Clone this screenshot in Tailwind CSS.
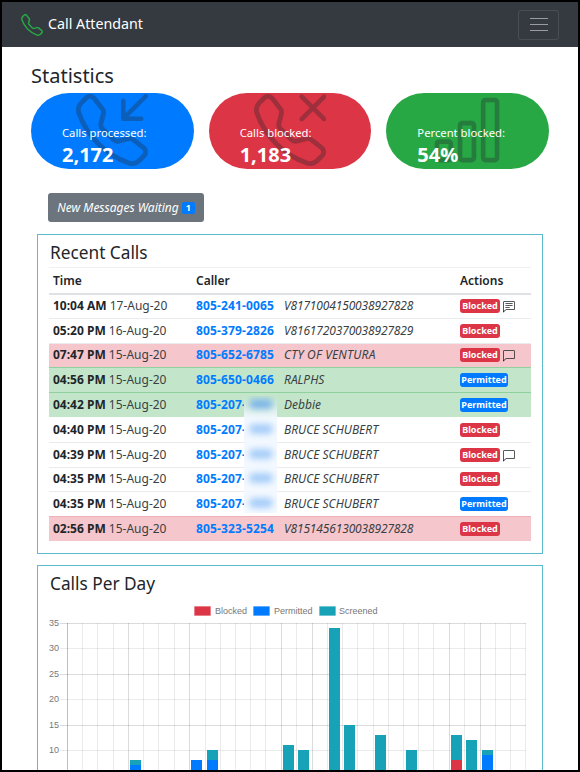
<!DOCTYPE html>
<html lang="en">
<head>
  <meta charset="UTF-8" />
  <title>Call Attendant</title>
  <script src="https://cdn.jsdelivr.net/npm/@tailwindcss/browser@4"></script>
</head>
<body class="bg-black">
<div class="w-[580px] h-[772px] border-2 border-black bg-white overflow-hidden font-['Noto_Sans',sans-serif] text-[#212529] text-[12px]">

  <!-- Navbar -->
  <nav class="h-[45px] bg-[#343a40] flex items-center justify-between pl-[19px] pr-[19px]">
    <div class="flex items-center gap-[5px]">
      <svg class="w-[22px] h-[22px] text-[#28a745]" viewBox="0 0 16 16" fill="currentColor"><path fill-rule="evenodd" d="M3.654 1.328a.678.678 0 0 0-1.015-.063L1.605 2.3c-.483.484-.661 1.169-.45 1.77a17.568 17.568 0 0 0 4.168 6.608 17.569 17.569 0 0 0 6.608 4.168c.601.211 1.286.033 1.77-.45l1.034-1.034a.678.678 0 0 0-.063-1.015l-2.307-1.794a.678.678 0 0 0-.58-.122l-2.19.547a1.745 1.745 0 0 1-1.657-.459L5.482 8.062a1.745 1.745 0 0 1-.46-1.657l.548-2.19a.678.678 0 0 0-.122-.58L3.654 1.328zM1.884.511a1.745 1.745 0 0 1 2.612.163L6.29 2.98c.329.423.445.974.315 1.494l-.547 2.19a.678.678 0 0 0 .178.643l2.457 2.457a.678.678 0 0 0 .644.178l2.189-.547a1.745 1.745 0 0 1 1.494.315l2.306 1.794c.829.645.905 1.87.163 2.611l-1.034 1.034c-.74.74-1.846 1.065-2.877.702a18.634 18.634 0 0 1-7.01-4.42 18.634 18.634 0 0 1-4.42-7.009c-.362-1.03-.037-2.137.703-2.877L1.885.511z"/></svg>
      <span class="text-white text-[14.25px] leading-[20px] mb-[2px]">Call Attendant</span>
    </div>
    <button class="w-[41px] h-[30px] border border-white/10 rounded-[3px] flex flex-col items-center justify-center gap-[5px]">
      <span class="block w-[18px] h-px bg-white/50"></span>
      <span class="block w-[18px] h-px bg-white/50"></span>
      <span class="block w-[18px] h-px bg-white/50"></span>
    </button>
  </nav>

  <main class="pl-[29px]">
    <h2 class="h-[46px] pt-[15px] text-[20px] leading-[28px]">Statistics</h2>

    <!-- Stat pills -->
    <div class="flex gap-[15px] w-[518px] text-white">
      <div class="relative flex-1 h-[76px] rounded-[38px] bg-[#007bff] overflow-hidden pl-[31px] pt-[31px]">
        <svg class="absolute left-[45px] top-[1px] w-[72px] h-[72px] text-[#212529]/33" viewBox="0 0 16 16" fill="currentColor"><path fill-rule="evenodd" d="M3.654 1.328a.678.678 0 0 0-1.015-.063L1.605 2.3c-.483.484-.661 1.169-.45 1.77a17.568 17.568 0 0 0 4.168 6.608 17.569 17.569 0 0 0 6.608 4.168c.601.211 1.286.033 1.77-.45l1.034-1.034a.678.678 0 0 0-.063-1.015l-2.307-1.794a.678.678 0 0 0-.58-.122l-2.19.547a1.745 1.745 0 0 1-1.657-.459L5.482 8.062a1.745 1.745 0 0 1-.46-1.657l.548-2.19a.678.678 0 0 0-.122-.58L3.654 1.328zM1.884.511a1.745 1.745 0 0 1 2.612.163L6.29 2.98c.329.423.445.974.315 1.494l-.547 2.19a.678.678 0 0 0 .178.643l2.457 2.457a.678.678 0 0 0 .644.178l2.189-.547a1.745 1.745 0 0 1 1.494.315l2.306 1.794c.829.645.905 1.87.163 2.611l-1.034 1.034c-.74.74-1.846 1.065-2.877.702a18.634 18.634 0 0 1-7.01-4.42 18.634 18.634 0 0 1-4.42-7.009c-.362-1.03-.037-2.137.703-2.877L1.885.511z"/><path fill-rule="evenodd" d="M15.854.146a.5.5 0 0 1 0 .708L11.707 5H14.5a.5.5 0 0 1 0 1h-4a.5.5 0 0 1-.5-.5v-4a.5.5 0 0 1 1 0v2.793L15.146.146a.5.5 0 0 1 .708 0z"/></svg>
        <div class="relative text-[11.25px] leading-[18px]">Calls processed:</div>
        <div class="relative text-[20px] leading-[26px] font-bold">2,172</div>
      </div>
      <div class="relative flex-1 h-[76px] rounded-[38px] bg-[#dc3545] overflow-hidden pl-[31px] pt-[31px]">
        <svg class="absolute left-[45px] top-[1px] w-[72px] h-[72px] text-[#212529]/33" viewBox="0 0 16 16" fill="currentColor"><path fill-rule="evenodd" d="M3.654 1.328a.678.678 0 0 0-1.015-.063L1.605 2.3c-.483.484-.661 1.169-.45 1.77a17.568 17.568 0 0 0 4.168 6.608 17.569 17.569 0 0 0 6.608 4.168c.601.211 1.286.033 1.77-.45l1.034-1.034a.678.678 0 0 0-.063-1.015l-2.307-1.794a.678.678 0 0 0-.58-.122l-2.19.547a1.745 1.745 0 0 1-1.657-.459L5.482 8.062a1.745 1.745 0 0 1-.46-1.657l.548-2.19a.678.678 0 0 0-.122-.58L3.654 1.328zM1.884.511a1.745 1.745 0 0 1 2.612.163L6.29 2.98c.329.423.445.974.315 1.494l-.547 2.19a.678.678 0 0 0 .178.643l2.457 2.457a.678.678 0 0 0 .644.178l2.189-.547a1.745 1.745 0 0 1 1.494.315l2.306 1.794c.829.645.905 1.87.163 2.611l-1.034 1.034c-.74.74-1.846 1.065-2.877.702a18.634 18.634 0 0 1-7.01-4.42 18.634 18.634 0 0 1-4.42-7.009c-.362-1.03-.037-2.137.703-2.877L1.885.511z"/><path fill="none" stroke="currentColor" stroke-linecap="round" d="M10.6.6l5 5M15.6.6l-5 5"/></svg>
        <div class="relative text-[11.25px] leading-[18px]">Calls blocked:</div>
        <div class="relative text-[20px] leading-[26px] font-bold">1,183</div>
      </div>
      <div class="relative flex-1 h-[76px] rounded-[38px] bg-[#28a745] overflow-hidden pl-[31px] pt-[31px]">
        <svg class="absolute left-[44px] top-[0px] w-[74px] h-[74px] text-[#212529]/33" viewBox="0 0 16 16" fill="currentColor"><path fill-rule="evenodd" d="M4 11H2v3h2v-3zm5-4H7v7h2V7zm5-5v12h-2V2h2zm-2-1a1 1 0 0 0-1 1v12a1 1 0 0 0 1 1h2a1 1 0 0 0 1-1V2a1 1 0 0 0-1-1h-2zM6 7a1 1 0 0 1 1-1h2a1 1 0 0 1 1 1v7a1 1 0 0 1-1 1H7a1 1 0 0 1-1-1V7zm-5 4a1 1 0 0 1 1-1h2a1 1 0 0 1 1 1v3a1 1 0 0 1-1 1H2a1 1 0 0 1-1-1v-3z"/></svg>
        <div class="relative text-[11.25px] leading-[18px]">Percent blocked:</div>
        <div class="relative text-[20px] leading-[26px] font-bold">54%</div>
      </div>
    </div>

    <!-- Messages button -->
    <button class="mt-[24px] ml-[17px] w-[156px] h-[29px] bg-[#6c757d] rounded-[3px] text-white italic text-[12px] flex items-center justify-center gap-[3px]">
      New Messages Waiting
      <span class="not-italic font-bold text-[9px] leading-[12px] w-[13px] rounded-[2px] bg-[#007bff]">1</span>
    </button>

    <!-- Recent calls -->
    <section class="relative mt-[12px] ml-[6px] w-[506px] h-[320px] border border-[#5bbccb] pl-[11px] pt-[4px]">
      <h3 class="ml-px h-[28px] text-[17.25px] leading-[28px]">Recent Calls</h3>
      <table class="w-[482px] table-fixed border-collapse text-[#3a3f44]">
        <colgroup><col class="w-[144px]"><col class="w-[88px]"><col class="w-[176px]"><col class="w-[74px]"></colgroup>
        <thead>
          <tr class="h-[26px] border-t border-[#eef0f2] border-b-2 border-b-[#dee2e6] text-left text-[#212529]">
            <th class="pl-[4px] pt-[2px] font-semibold">Time</th><th class="pl-[3px] pt-[2px] font-semibold">Caller</th><th></th><th class="pl-[3px] pt-[2px] font-semibold">Actions</th>
          </tr>
        </thead>
        <tbody>
          <tr class="h-[24.8px] border-b border-[#e9ecef]">
            <td class="pl-[4px]"><b class="text-[#212529]">10:04 AM</b> 17-Aug-20</td>
            <td class="pl-[3px] font-bold text-[#007bff] tracking-[.15px]">805-241-0065</td>
            <td class="pl-[3px] italic tracking-[-.15px]">V8171004150038927828</td>
            <td class="pl-[3px]"><div class="flex items-center gap-[3px]"><span class="h-[14px] w-[40px] rounded-[3px] bg-[#dc3545] text-white font-bold text-[9px] leading-[14px] text-center">Blocked</span><svg class="w-[12px] h-[12px] mt-[2px] text-[#212529]" viewBox="0 0 16 16" fill="currentColor"><path fill-rule="evenodd" d="M14 1a1 1 0 0 1 1 1v8a1 1 0 0 1-1 1H4.414A2 2 0 0 0 3 11.586l-2 2V2a1 1 0 0 1 1-1h12zM2 0a2 2 0 0 0-2 2v12.793a.5.5 0 0 0 .854.353l2.853-2.853A1 1 0 0 1 4.414 12H14a2 2 0 0 0 2-2V2a2 2 0 0 0-2-2H2z"/><path fill-rule="evenodd" d="M3 3.5a.5.5 0 0 1 .5-.5h9a.5.5 0 0 1 0 1h-9a.5.5 0 0 1-.5-.5zM3 6a.5.5 0 0 1 .5-.5h9a.5.5 0 0 1 0 1h-9A.5.5 0 0 1 3 6zm0 2.5a.5.5 0 0 1 .5-.5h5a.5.5 0 0 1 0 1h-5a.5.5 0 0 1-.5-.5z"/></svg></div></td>
          </tr>
          <tr class="h-[24.8px] border-b border-[#e9ecef]">
            <td class="pl-[4px]"><b class="text-[#212529]">05:20 PM</b> 16-Aug-20</td>
            <td class="pl-[3px] font-bold text-[#007bff] tracking-[.15px]">805-379-2826</td>
            <td class="pl-[3px] italic tracking-[-.15px]">V8161720370038927829</td>
            <td class="pl-[3px]"><div class="flex items-center"><span class="h-[14px] w-[40px] rounded-[3px] bg-[#dc3545] text-white font-bold text-[9px] leading-[14px] text-center">Blocked</span></div></td>
          </tr>
          <tr class="h-[24.8px] bg-[#f5c6cb] border-t border-b border-t-[#f1b0b7] border-b-[#8fd19e]">
            <td class="pl-[4px]"><b class="text-[#212529]">07:47 PM</b> 15-Aug-20</td>
            <td class="pl-[3px] font-bold text-[#007bff] tracking-[.15px]">805-652-6785</td>
            <td class="pl-[3px] italic tracking-[.2px]">CTY OF VENTURA</td>
            <td class="pl-[3px]"><div class="flex items-center gap-[3px]"><span class="h-[14px] w-[40px] rounded-[3px] bg-[#dc3545] text-white font-bold text-[9px] leading-[14px] text-center">Blocked</span><svg class="w-[12px] h-[12px] mt-[2px] text-[#212529]" viewBox="0 0 16 16" fill="currentColor"><path fill-rule="evenodd" d="M14 1a1 1 0 0 1 1 1v8a1 1 0 0 1-1 1H4.414A2 2 0 0 0 3 11.586l-2 2V2a1 1 0 0 1 1-1h12zM2 0a2 2 0 0 0-2 2v12.793a.5.5 0 0 0 .854.353l2.853-2.853A1 1 0 0 1 4.414 12H14a2 2 0 0 0 2-2V2a2 2 0 0 0-2-2H2z"/></svg></div></td>
          </tr>
          <tr class="h-[24.8px] bg-[#c3e6cb] border-b border-[#8fd19e]">
            <td class="pl-[4px]"><b class="text-[#212529]">04:56 PM</b> 15-Aug-20</td>
            <td class="pl-[3px] font-bold text-[#007bff] tracking-[.15px]">805-650-0466</td>
            <td class="pl-[3px] italic">RALPHS</td>
            <td class="pl-[3px]"><div class="flex items-center"><span class="h-[14px] w-[48px] rounded-[3px] bg-[#007bff] text-white font-bold text-[9px] leading-[14px] text-center">Permitted</span></div></td>
          </tr>
          <tr class="h-[24.8px] bg-[#c3e6cb]">
            <td class="pl-[4px]"><b class="text-[#212529]">04:42 PM</b> 15-Aug-20</td>
            <td class="pl-[3px] font-bold text-[#007bff] tracking-[.15px]">805-207-</td>
            <td class="pl-[3px] italic">Debbie</td>
            <td class="pl-[3px]"><div class="flex items-center"><span class="h-[14px] w-[48px] rounded-[3px] bg-[#007bff] text-white font-bold text-[9px] leading-[14px] text-center">Permitted</span></div></td>
          </tr>
          <tr class="h-[24.8px] border-b border-[#e9ecef]">
            <td class="pl-[4px]"><b class="text-[#212529]">04:40 PM</b> 15-Aug-20</td>
            <td class="pl-[3px] font-bold text-[#007bff] tracking-[.15px]">805-207-</td>
            <td class="pl-[3px] italic">BRUCE SCHUBERT</td>
            <td class="pl-[3px]"><div class="flex items-center"><span class="h-[14px] w-[40px] rounded-[3px] bg-[#dc3545] text-white font-bold text-[9px] leading-[14px] text-center">Blocked</span></div></td>
          </tr>
          <tr class="h-[24.8px] border-b border-[#e9ecef]">
            <td class="pl-[4px]"><b class="text-[#212529]">04:39 PM</b> 15-Aug-20</td>
            <td class="pl-[3px] font-bold text-[#007bff] tracking-[.15px]">805-207-</td>
            <td class="pl-[3px] italic">BRUCE SCHUBERT</td>
            <td class="pl-[3px]"><div class="flex items-center gap-[3px]"><span class="h-[14px] w-[40px] rounded-[3px] bg-[#dc3545] text-white font-bold text-[9px] leading-[14px] text-center">Blocked</span><svg class="w-[12px] h-[12px] mt-[2px] text-[#212529]" viewBox="0 0 16 16" fill="currentColor"><path fill-rule="evenodd" d="M14 1a1 1 0 0 1 1 1v8a1 1 0 0 1-1 1H4.414A2 2 0 0 0 3 11.586l-2 2V2a1 1 0 0 1 1-1h12zM2 0a2 2 0 0 0-2 2v12.793a.5.5 0 0 0 .854.353l2.853-2.853A1 1 0 0 1 4.414 12H14a2 2 0 0 0 2-2V2a2 2 0 0 0-2-2H2z"/></svg></div></td>
          </tr>
          <tr class="h-[24.8px] border-b border-[#e9ecef]">
            <td class="pl-[4px]"><b class="text-[#212529]">04:35 PM</b> 15-Aug-20</td>
            <td class="pl-[3px] font-bold text-[#007bff] tracking-[.15px]">805-207-</td>
            <td class="pl-[3px] italic">BRUCE SCHUBERT</td>
            <td class="pl-[3px]"><div class="flex items-center"><span class="h-[14px] w-[40px] rounded-[3px] bg-[#dc3545] text-white font-bold text-[9px] leading-[14px] text-center">Blocked</span></div></td>
          </tr>
          <tr class="h-[24.8px]">
            <td class="pl-[4px]"><b class="text-[#212529]">04:35 PM</b> 15-Aug-20</td>
            <td class="pl-[3px] font-bold text-[#007bff] tracking-[.15px]">805-207-</td>
            <td class="pl-[3px] italic">BRUCE SCHUBERT</td>
            <td class="pl-[3px]"><div class="flex items-center"><span class="h-[14px] w-[48px] rounded-[3px] bg-[#007bff] text-white font-bold text-[9px] leading-[14px] text-center">Permitted</span></div></td>
          </tr>
          <tr class="h-[24.8px] bg-[#f5c6cb] border-t border-[#f1b0b7]">
            <td class="pl-[4px]"><b class="text-[#212529]">02:56 PM</b> 15-Aug-20</td>
            <td class="pl-[3px] font-bold text-[#007bff] tracking-[.15px]">805-323-5254</td>
            <td class="pl-[3px] italic tracking-[-.15px]">V8151456130038927828</td>
            <td class="pl-[3px]"><div class="flex items-center"><span class="h-[14px] w-[40px] rounded-[3px] bg-[#dc3545] text-white font-bold text-[9px] leading-[14px] text-center">Blocked</span></div></td>
          </tr>
        </tbody>
      </table>
      <!-- blurred-out phone digits -->
      <div class="absolute left-[206px] top-[161px] w-[33px] h-[117px] bg-linear-to-b from-[#c3e6cb] from-0% via-[#f2f8ff] via-20% to-[#f4f9ff] flex flex-col gap-[14.8px] pt-[3px] items-center overflow-hidden">
        <span class="block shrink-0 w-[24px] h-[10px] rounded-full bg-[#7db6e8] blur-[3px]"></span>
        <span class="block shrink-0 w-[24px] h-[10px] rounded-full bg-[#a6cdf9] blur-[3px]"></span>
        <span class="block shrink-0 w-[24px] h-[10px] rounded-full bg-[#a6cdf9] blur-[3px]"></span>
        <span class="block shrink-0 w-[24px] h-[10px] rounded-full bg-[#a6cdf9] blur-[3px]"></span>
        <span class="block shrink-0 w-[24px] h-[10px] rounded-full bg-[#a6cdf9] blur-[3px]"></span>
      </div>
    </section>

    <!-- Calls per day -->
    <section class="mt-[11px] ml-[6px] w-[506px] h-[220px] border border-[#5bbccb] pl-[12px] pt-[4px]">
      <h3 class="text-[17.25px] leading-[28px]">Calls Per Day</h3>
    </section>
  </main>

  <!-- chart drawn over the card, page coordinates -->
  <svg class="absolute left-0 top-0 w-[580px] h-[770px] pointer-events-none" viewBox="0 0 580 770" font-family="Liberation Sans, sans-serif" font-size="9" fill="#777">
    <rect x="194.5" y="606.5" width="16" height="9" fill="#dc3545" stroke="#dc3545" stroke-opacity=".25"/>
    <text x="215" y="614">Blocked</text>
    <rect x="253.5" y="606.5" width="16" height="9" fill="#007bff" stroke="#007bff" stroke-opacity=".25"/>
    <text x="274" y="614">Permitted</text>
    <rect x="319.5" y="606.5" width="16" height="9" fill="#17a2b8" stroke="#17a2b8" stroke-opacity=".25"/>
    <text x="339" y="614">Screened</text>
    <g text-anchor="end">
      <text x="59" y="626">35</text><text x="59" y="651">30</text><text x="59" y="677">25</text><text x="59" y="702">20</text><text x="59" y="728">15</text><text x="59" y="753">10</text>
    </g>
    <path fill="none" stroke="#000" stroke-opacity=".14" d="M60 623.5H526M60 674.5H526M60 725.5H526M128.5 623V770M189.5 623V770M281.5 623V770M312.5 623V770M449.5 623V770M480.5 623V770"/>
    <path fill="none" stroke="#000" stroke-opacity=".08" d="M60 648.5H526M60 699.5H526M60 750.5H526M82.5 623V770M97.5 623V770M113.5 623V770M143.5 623V770M158.5 623V770M174.5 623V770M205.5 623V770M220.5 623V770M235.5 623V770M250.5 623V770M265.5 623V770M296.5 623V770M327.5 623V770M342.5 623V770M357.5 623V770M373.5 623V770M388.5 623V770M403.5 623V770M418.5 623V770M433.5 623V770M464.5 623V770M495.5 623V770M510.5 623V770M525.5 623V770"/>
    <path fill="none" stroke="#000" stroke-opacity=".25" d="M67.5 623V770"/>
    <g fill="#17a2b8">
      <rect x="130" y="760" width="11" height="10"/>
      <rect x="207" y="750" width="11" height="20"/>
      <rect x="283" y="745" width="11" height="25"/>
      <rect x="298" y="750" width="11" height="20"/>
      <rect x="329" y="628" width="11" height="142"/>
      <rect x="344" y="725" width="11" height="45"/>
      <rect x="375" y="735" width="11" height="35"/>
      <rect x="406" y="750" width="11" height="20"/>
      <rect x="451" y="735" width="11" height="35"/>
      <rect x="466" y="740" width="11" height="30"/>
      <rect x="482" y="750" width="11" height="20"/>
    </g>
    <g fill="#007bff">
      <rect x="130" y="765" width="11" height="5"/>
      <rect x="191" y="760" width="11" height="10"/>
      <rect x="207" y="760" width="11" height="10"/>
      <rect x="482" y="755" width="11" height="15"/>
    </g>
    <rect x="451" y="760" width="11" height="10" fill="#dc3545"/>
  </svg>
</div>
</body>
</html>
